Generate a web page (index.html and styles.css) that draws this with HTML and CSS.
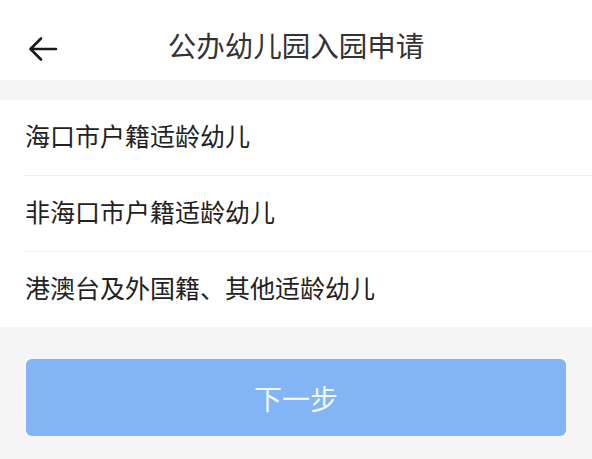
FILE: index.html
```html
<!DOCTYPE html>
<html lang="zh-CN">
<head>
    <meta charset="UTF-8">
    <meta name="viewport" content="width=device-width, initial-scale=1.0">
    <title>公办幼儿园入园申请</title>
    <link rel="stylesheet" href="styles.css">
</head>
<body>
    <div class="header">
        <span class="back">
            <svg width="30" height="26" viewBox="0 0 30 26">
                <path d="M28 13 H3 M13 2.5 L2.5 13 L13 23.5" fill="none" stroke="#1a1a1a" stroke-width="2.6" stroke-linecap="round" stroke-linejoin="round"/>
            </svg>
        </span>
        <h1 class="title">公办幼儿园入园申请</h1>
        <span></span>
    </div>

    <div class="list">
        <div class="item">海口市户籍适龄幼儿</div>
        <div class="item">非海口市户籍适龄幼儿</div>
        <div class="item">港澳台及外国籍、其他适龄幼儿</div>
    </div>

    <button class="next">下一步</button>
</body>
</html>
```

FILE: styles.css
```css
body {
    margin: 0;
    background-color: #f5f5f5;
    font-family: "Noto Sans CJK SC", "Noto Sans", sans-serif;
}
.header {
    height: 80px;
    background-color: #fff;
    display: grid;
    grid-template-columns: 1fr auto 1fr;
    align-items: center;
}
.back {
    padding-left: 28px;
    padding-top: 18px;
    display: flex;
    align-items: center;
}
.title {
    margin: 0;
    padding-top: 8px;
    font-size: 28.5px;
    font-weight: 400;
    color: #333;
}
.list {
    margin-top: 20px;
    background-color: #fff;
}
.item {
    height: 69px;
    padding-bottom: 6px;
    margin-left: 24px;
    padding-left: 1px;
    display: flex;
    align-items: center;
    font-size: 25px;
    color: #222;
    border-bottom: 1px solid #efefef;
}
.item:last-child {
    border-bottom: none;
}
.next {
    display: block;
    width: calc(100% - 52px);
    height: 77px;
    margin: 32px 26px 0;
    border: none;
    border-radius: 6px;
    background-color: #82b4f6;
    color: #f4f8ff;
    font-family: inherit;
    font-size: 28px;
}
```
